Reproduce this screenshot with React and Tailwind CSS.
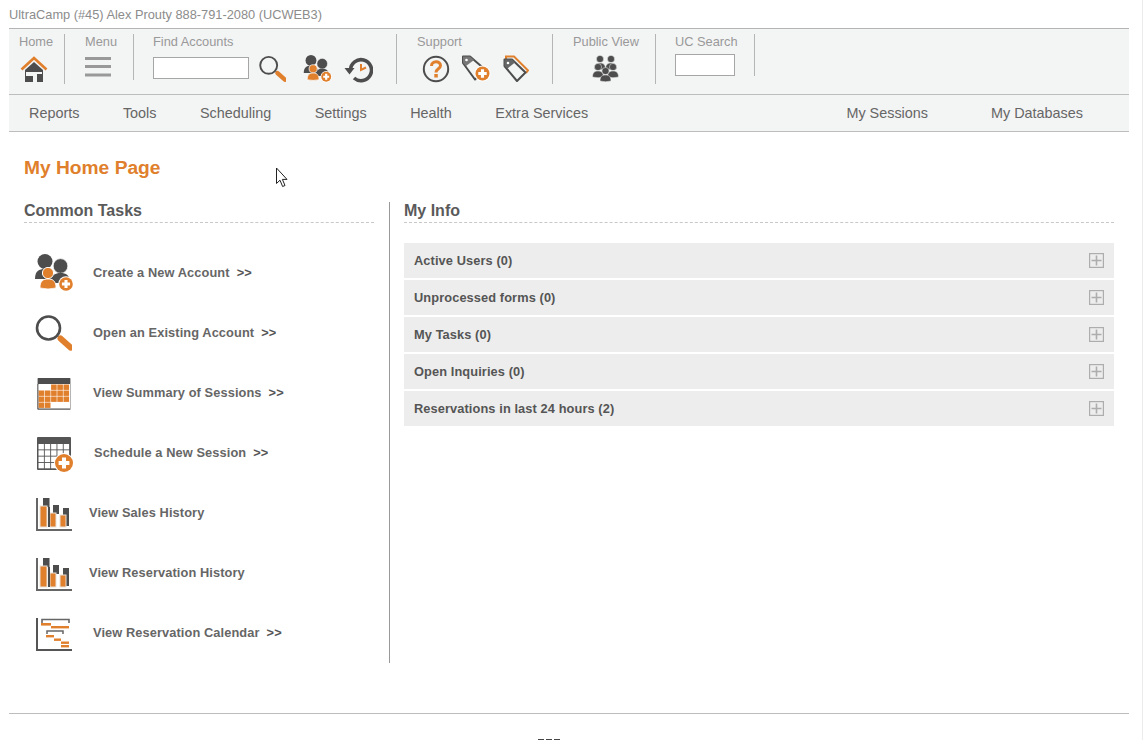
import React from 'react';

const ORANGE = '#e07f2c';
const DARK = '#4d4d4d';

function Magnifier({ size = 30 }) {
  return (
    <svg width={size} height={size} viewBox="0 0 38 38">
      <circle cx="14.5" cy="14" r="11.5" fill="none" stroke={DARK} strokeWidth="2.6" />
      <path d="M23 22.5 L26 22 L27 25 Z" fill={DARK} />
      <path d="M26.5 24.5 L36.5 33.5" stroke={ORANGE} strokeWidth="6" strokeLinecap="round" />
    </svg>
  );
}

function PlusBadge({ cx, cy, r }) {
  return (
    <g>
      <circle cx={cx} cy={cy} r={r + 1} fill="#fff" />
      <circle cx={cx} cy={cy} r={r} fill={ORANGE} />
      <path d={`M${cx - r * 0.6} ${cy} H${cx + r * 0.6} M${cx} ${cy - r * 0.6} V${cy + r * 0.6}`} stroke="#fff" strokeWidth={r * 0.45} />
    </g>
  );
}

function UsersAdd({ size = 40 }) {
  return (
    <svg width={size} height={size * 0.95} viewBox="0 0 40 38">
      <circle cx="11" cy="7.5" r="7.5" fill={DARK} />
      <path d="M1 25 C1 17 5 15 11 15 C17 15 21 17 21 25 Z" fill={DARK} />
      <circle cx="26.5" cy="12" r="7.4" fill={DARK} stroke="#fff" strokeWidth="0.8" />
      <path d="M18 29 C18 21 21 19 26.5 19 C32 19 36 21 36 29 Z" fill={DARK} />
      <circle cx="14" cy="19" r="5.6" fill={ORANGE} stroke="#fff" strokeWidth="1" />
      <path d="M6 34 C6 27 9 25 14 25 C19 25 22 27 22 34 Q14 36 6 34 Z" fill={ORANGE} stroke="#fff" strokeWidth="0.8" />
      <PlusBadge cx={32} cy={30} r={6.8} />
    </svg>
  );
}

function HomeIcon() {
  return (
    <svg width="28" height="27" viewBox="0 0 28 27">
      <path d="M1.5 13.5 L14 2 L26.5 13.5" fill="none" stroke={ORANGE} strokeWidth="2.6" />
      <path d="M5 14 L14 6 L23 14 V26 H17 V18 H22 V16 H6 V20 H13 V26 H5 Z" fill={DARK} />
      <rect x="17" y="18" width="5" height="8" fill={DARK} />
    </svg>
  );
}

function MenuIcon() {
  return (
    <svg width="27" height="20" viewBox="0 0 27 20">
      <rect width="26" height="3" fill="#999" />
      <rect y="8" width="26" height="3" fill="#999" />
      <rect y="16.5" width="26" height="3" fill="#999" />
    </svg>
  );
}

function HistoryIcon() {
  return (
    <svg width="29" height="26" viewBox="0 0 29 26">
      <path d="M6.5 13 A10.5 10.5 0 1 1 10 21" fill="none" stroke={DARK} strokeWidth="3.6" />
      <path d="M0.5 11 L10.5 11 L5.5 17.5 Z" fill={DARK} />
      <path d="M17 7 L17 13 L22 10.5" fill="none" stroke={ORANGE} strokeWidth="2" />
    </svg>
  );
}

function HelpIcon() {
  return (
    <svg width="28" height="28" viewBox="0 0 28 28">
      <circle cx="14" cy="14" r="12.2" fill="none" stroke={DARK} strokeWidth="2" />
      <path d="M9.5 11 C9.5 5.5 18.5 5.5 18.5 10.5 C18.5 14 14 13.5 14 17.5" fill="none" stroke={ORANGE} strokeWidth="3" />
      <rect x="12.3" y="19" width="3.5" height="3.5" fill={ORANGE} />
    </svg>
  );
}

function TagAdd() {
  return (
    <svg width="30" height="27" viewBox="0 0 30 27">
      <path d="M2 8.5 V2 H9 L24 15 L14 25 Z" transform="translate(0 -0.5)" fill="none" stroke={DARK} strokeWidth="2" strokeLinejoin="round" />
      <path d="M2 1.5 H9 L13 5 L5 11 L2 8 Z" fill="#777" />
      <circle cx="5.5" cy="5" r="1.3" fill="#fff" />
      <PlusBadge cx={21.5} cy={18.5} r={7} />
    </svg>
  );
}

function Tags() {
  return (
    <svg width="26" height="27" viewBox="0 0 26 27">
      <path d="M3 4 V1.5 H11 L25 15.5 L23 18" fill="none" stroke={ORANGE} strokeWidth="2" />
      <path d="M1.5 11 V4.5 H9 L22.5 17.5 L14 26 Z" fill="none" stroke={DARK} strokeWidth="2" strokeLinejoin="round" />
      <path d="M1.5 4.5 H9 L12 7.5 L4.5 13.5 L1.5 11 Z" fill="#666" />
      <circle cx="5" cy="8" r="1.3" fill="#fff" />
    </svg>
  );
}

function Group() {
  const person = (x, y) => (
    <g key={`${x}-${y}`}>
      <circle cx={x} cy={y} r="3.6" fill={DARK} stroke="#f3f4f4" strokeWidth="0.5" />
      <path d={`M${x - 5.5} ${y + 10} C${x - 5.5} ${y + 5} ${x - 3} ${y + 4} ${x} ${y + 4} C${x + 3} ${y + 4} ${x + 5.5} ${y + 5} ${x + 5.5} ${y + 10} Q${x} ${y + 11.5} ${x - 5.5} ${y + 10} Z`} fill={DARK} stroke="#f3f4f4" strokeWidth="0.5" />
    </g>
  );
  return (
    <svg width="27" height="27" viewBox="0 0 27 27">
      {person(8, 4)}
      {person(19, 4)}
      {person(6, 12)}
      {person(21, 12)}
      {person(13.5, 16)}
    </svg>
  );
}

function CalendarFull() {
  const cells = [
    [0, 0, 1, 1, 1], [1, 1, 1, 1, 1], [1, 1, 1, 1, 1], [1, 1, 0, 0, 0],
  ];
  return (
    <svg width="34" height="32" viewBox="0 0 34 32">
      <rect x="0" y="0" width="34" height="32" fill="#b5b5b5" rx="1" />
      <rect x="1" y="0" width="32" height="6" fill={DARK} />
      <rect x="1" y="6" width="32" height="25" fill="#fff" />
      <path d="M1 6 V31 H33" fill="none" stroke={DARK} strokeWidth="1" />
      {cells.map((row, r) =>
        row.map((on, c) => (
          <rect key={`${r}${c}`} x={1.7 + c * 6.2} y={6.5 + r * 6} width="5.6" height="5.4" fill={on ? ORANGE : '#fff'} />
        ))
      )}
    </svg>
  );
}

function CalendarAdd() {
  return (
    <svg width="38" height="36" viewBox="0 0 38 36">
      <rect x="0" y="0" width="34" height="33" fill="#555" rx="1" />
      {[0, 1, 2, 3].map((r) =>
        [0, 1, 2, 3, 4].map((c) => (
          <rect key={`${r}${c}`} x={1.5 + c * 6.3} y={7 + r * 6.3} width="5.4" height="5.4" fill="#fff" />
        ))
      )}
      <PlusBadge cx={27} cy={26} r={9} />
    </svg>
  );
}

function BarsIcon() {
  return (
    <svg width="36" height="33" viewBox="0 0 36 33">
      <path d="M1 0 V32 H36" fill="none" stroke="#666" strokeWidth="2" />
      <rect x="7" y="0" width="6.5" height="9" fill={DARK} />
      <rect x="17" y="7" width="6" height="9" fill={DARK} />
      <rect x="27" y="10" width="6" height="18" fill={DARK} />
      <rect x="4" y="8" width="7" height="21" fill={ORANGE} stroke="#e8e2da" strokeWidth="1" />
      <rect x="14" y="15" width="6" height="14" fill={ORANGE} stroke="#e8e2da" strokeWidth="1" />
      <rect x="24" y="17" width="6" height="12" fill={ORANGE} stroke="#e8e2da" strokeWidth="1" />
      <rect x="12" y="9" width="2" height="20" fill={DARK} />
    </svg>
  );
}

function GanttIcon() {
  return (
    <svg width="36" height="33" viewBox="0 0 36 33">
      <path d="M1 0 V32 H36" fill="none" stroke="#555" strokeWidth="2" />
      <path d="M6 5 V1.5 H33 V5" fill="none" stroke="#666" strokeWidth="1.6" />
      <rect x="5" y="5" width="10" height="2" fill={ORANGE} />
      <rect x="5" y="7" width="10" height="1" fill="#eab27f" />
      <rect x="15" y="8" width="18" height="2.4" fill={ORANGE} />
      <path d="M11 16 V13 H27 V16" fill="none" stroke="#666" strokeWidth="1.5" />
      <rect x="10" y="17" width="8" height="2.4" fill={ORANGE} />
      <rect x="18" y="20.5" width="7" height="2.4" fill={ORANGE} />
      <rect x="25" y="23.5" width="8" height="2.4" fill={ORANGE} />
      <rect x="25" y="27" width="8" height="2.4" fill={ORANGE} />
    </svg>
  );
}

function ExpandBox() {
  return (
    <svg width="15" height="15" viewBox="0 0 15 15">
      <rect x="0.6" y="0.6" width="13.8" height="13.8" fill="none" stroke="#adadad" strokeWidth="1.2" />
      <path d="M2.5 7.5 H12.5 M7.5 2.5 V12.5" stroke="#adadad" strokeWidth="1.6" />
    </svg>
  );
}

function Cursor() {
  return (
    <svg width="14" height="21" viewBox="0 0 14 21">
      <path d="M1.5 1 V16.5 L5 13.2 L7.6 19.5 L10 18.5 L7.4 12.4 H12 Z" fill="#fff" stroke="#222" strokeWidth="1" strokeLinejoin="round" />
    </svg>
  );
}

const tasks = [
  { icon: <UsersAdd />, label: 'Create a New Account', more: true, iconBox: 'pl-[10px]', textPad: 'pl-[19px]', nudge: '' },
  { icon: <Magnifier size={38} />, label: 'Open an Existing Account', more: true, iconBox: 'pl-[10px]', textPad: 'pl-[19px]', nudge: '' },
  { icon: <CalendarFull />, label: 'View Summary of Sessions', more: true, iconBox: 'pl-[13px]', textPad: 'pl-[16px]', nudge: 'mt-[2px]' },
  { icon: <CalendarAdd />, label: 'Schedule a New Session', more: true, iconBox: 'pl-[13px]', textPad: 'pl-[17px]', nudge: 'mt-[4px]' },
  { icon: <BarsIcon />, label: 'View Sales History', iconBox: 'pl-[12px]', textPad: 'pl-[13px]', nudge: 'mt-[2px]' },
  { icon: <BarsIcon />, label: 'View Reservation History', iconBox: 'pl-[12px]', textPad: 'pl-[13px]', nudge: 'mt-[2px]' },
  { icon: <GanttIcon />, label: 'View Reservation Calendar', more: true, iconBox: 'pl-[12px]', textPad: 'pl-[17px]', nudge: 'mt-[2px]' },
];

const infoRows = ['Active Users (0)', 'Unprocessed forms (0)', 'My Tasks (0)', 'Open Inquiries (0)', 'Reservations in last 24 hours (2)'];

const navLeft = ['Reports', 'Tools', 'Scheduling', 'Settings', 'Health', 'Extra Services'];

function ToolSection({ label, width, height = 'h-[50px]', pad = 'pl-[10px]', children }) {
  return (
    <div className={`shrink-0 border-r border-[#b5b5b5] ${height} ${width} ${pad}`}>
      <div className="pt-[1px] text-[12.8px] leading-[14px] text-[#999]">{label}</div>
      {children}
    </div>
  );
}

export default function App() {
  return (
    <div className="relative h-screen overflow-hidden border-r border-[#ececec] bg-white font-['Liberation_Sans',Arial,sans-serif]">
      <div className="pr-[13px] pl-[9px]">
        <div className="h-[29px] border-b border-[#b5b5b5] pt-[8px] text-[12.8px] leading-[14px] text-[#8c8c8c]">
          UltraCamp (#45) Alex Prouty 888-791-2080 (UCWEB3)
        </div>

        <div className="flex h-[65px] bg-[#f3f4f4] pt-[5px]">
          <ToolSection label="Home" width="w-[56px]">
            <div className="mt-[7px] ml-[1px]"><HomeIcon /></div>
          </ToolSection>
          <ToolSection label="Menu" width="w-[69px]" height="h-[46px]" pad="pl-[20px]">
            <div className="mt-[8px]"><MenuIcon /></div>
          </ToolSection>
          <ToolSection label="Find Accounts" width="w-[263px]" pad="pl-[19px]">
            <div className="mt-[1px] flex items-start">
              <input className="mt-[7px] h-[22px] w-[96px] border border-[#a6a6a6] bg-white" />
              <div className="mt-[5px] ml-[9px]"><Magnifier size={28} /></div>
              <div className="mt-[5px] ml-[17px]"><UsersAdd size={29} /></div>
              <div className="mt-[7px] ml-[12px]"><HistoryIcon /></div>
            </div>
          </ToolSection>
          <ToolSection label="Support" width="w-[156px]" pad="pl-[20px]">
            <div className="mt-[6px] ml-[5px] flex items-start gap-[11px]">
              <HelpIcon />
              <TagAdd />
              <div className="ml-[1px]"><Tags /></div>
            </div>
          </ToolSection>
          <ToolSection label="Public View" width="w-[103px]" pad="pl-[20px]">
            <div className="mt-[6px] ml-[19px]"><Group /></div>
          </ToolSection>
          <div className="h-[42px] w-[99px] shrink-0 border-r border-[#b5b5b5] pl-[19px]">
            <div className="pt-[1px] text-[12.8px] leading-[14px] text-[#999]">UC Search</div>
            <input className="mt-[5px] h-[22px] w-[60px] border border-[#a6a6a6] bg-white" />
          </div>
        </div>

        <div className="flex h-[38px] items-center justify-between border-y border-[#bdbdbd] bg-[#f3f4f4] pt-[2px] pr-[46px] pl-[20px] text-[14.4px] text-[#666]">
          <div className="flex gap-[43.5px]">
            {navLeft.map((item) => (
              <span key={item}>{item}</span>
            ))}
          </div>
          <div className="flex gap-[63px]">
            <span>My Sessions</span>
            <span>My Databases</span>
          </div>
        </div>
      </div>

      <div className="pr-[28px] pl-[24px]">
        <h1 className="mt-[24px] text-[19.2px] leading-[24px] font-bold text-[#e07f2c]">My Home Page</h1>

        <div className="mt-[22px] flex">
          <div className="h-[461px] w-[366px] shrink-0 border-r border-[#999]">
            <div className="h-[21px] w-[350px] border-b border-dashed border-[#c8c8c8] pt-[1px] text-base leading-[16px] font-bold text-[#5a5a5a]">
              Common Tasks
            </div>
            <div className="mt-[20px] flex flex-col">
              {tasks.map((task) => (
                <div key={task.label} className={`flex h-[60px] items-center ${task.iconBox}`}>
                  <div className={`w-[40px] shrink-0 ${task.nudge}`}>{task.icon}</div>
                  <span className={`text-[12.8px] font-bold tracking-[0.1px] whitespace-nowrap text-[#666] ${task.textPad}`}>
                    {task.label}
                    {task.more && <span className="ml-[7px] text-[#555]">&gt;&gt;</span>}
                  </span>
                </div>
              ))}
            </div>
          </div>

          <div className="ml-[14px] flex-1">
            <div className="h-[21px] border-b border-dashed border-[#c8c8c8] pt-[1px] text-base leading-[16px] font-bold text-[#5a5a5a]">
              My Info
            </div>
            <div className="mt-[20px] flex flex-col gap-[2px]">
              {infoRows.map((row) => (
                <div key={row} className="flex h-[35px] items-center justify-between bg-[#ededed] px-[10px] text-[12.8px] font-bold tracking-[0.1px] text-[#555]">
                  <span>{row}</span>
                  <ExpandBox />
                </div>
              ))}
            </div>
          </div>
        </div>
      </div>

      <div className="mt-[50px] mr-[13px] ml-[9px] border-t border-[#bdbdbd]">
        <div className="mt-[25px] flex justify-center gap-[2px] pr-[40px]">
          <span className="h-[2px] w-[6px] bg-[#444]" />
          <span className="h-[2px] w-[6px] bg-[#444]" />
          <span className="h-[2px] w-[6px] bg-[#444]" />
        </div>
      </div>

      <div className="absolute top-[167px] left-[275px]"><Cursor /></div>
    </div>
  );
}
